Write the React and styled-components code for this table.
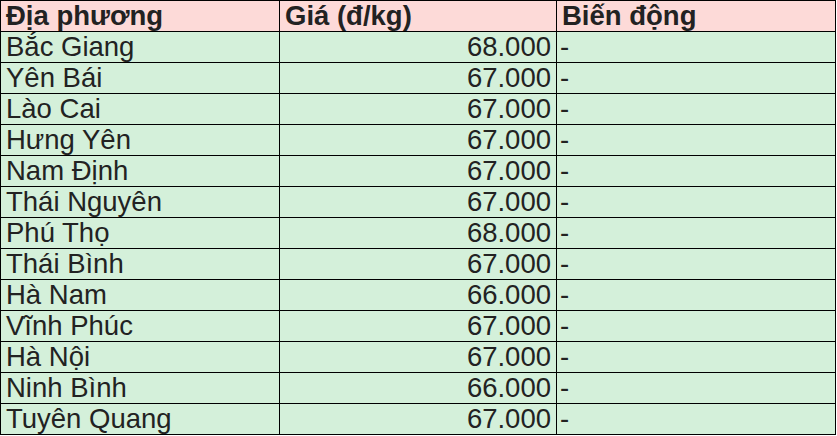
import React from "react";
import styled, { createGlobalStyle } from "styled-components";

const GlobalStyle = createGlobalStyle`
  html, body {
    margin: 0;
    padding: 0;
    background: #ffffff;
  }
  body {
    font-family: "Liberation Sans", Arial, sans-serif;
  }
`;

const rows = [
  { place: "Bắc Giang", price: "68.000", change: "-" },
  { place: "Yên Bái", price: "67.000", change: "-" },
  { place: "Lào Cai", price: "67.000", change: "-" },
  { place: "Hưng Yên", price: "67.000", change: "-" },
  { place: "Nam Định", price: "67.000", change: "-" },
  { place: "Thái Nguyên", price: "67.000", change: "-" },
  { place: "Phú Thọ", price: "68.000", change: "-" },
  { place: "Thái Bình", price: "67.000", change: "-" },
  { place: "Hà Nam", price: "66.000", change: "-" },
  { place: "Vĩnh Phúc", price: "67.000", change: "-" },
  { place: "Hà Nội", price: "67.000", change: "-" },
  { place: "Ninh Bình", price: "66.000", change: "-" },
  { place: "Tuyên Quang", price: "67.000", change: "-" },
];

const Table = styled.table`
  border-collapse: collapse;
  table-layout: fixed;
  width: 836px;
  font-family: "Liberation Sans", Arial, sans-serif;
  font-size: 27.5px;
  line-height: 30px;
  color: #222222;
`;

const Col = styled.col`
  width: ${(p) => p.$width}px;
`;

const HeadCell = styled.th`
  background: #fddad8;
  border: 1px solid #000;
  height: 30px;
  padding: 0 5px;
  text-align: left;
  font-weight: bold;
  white-space: nowrap;
  overflow: hidden;
`;

const cellPadding = {
  text: "0 5px",
  number: "0 5px 0 5px",
  change: "0 5px 0 3px",
};

const Cell = styled.td`
  background: #d4f0da;
  border: 1px solid #000;
  height: 30px;
  padding: ${(p) => cellPadding[p.$kind || "text"]};
  text-align: ${(p) => (p.$kind === "number" ? "right" : "left")};
  white-space: nowrap;
  overflow: hidden;
`;

export default function App() {
  return (
    <>
      <GlobalStyle />
      <Table>
        <colgroup>
          <Col $width={279} />
          <Col $width={277} />
          <Col $width={279} />
        </colgroup>
        <thead>
          <tr>
            <HeadCell>Địa phương</HeadCell>
            <HeadCell>Giá (đ/kg)</HeadCell>
            <HeadCell>Biến động</HeadCell>
          </tr>
        </thead>
        <tbody>
          {rows.map((row) => (
            <tr key={row.place}>
              <Cell>{row.place}</Cell>
              <Cell $kind="number">{row.price}</Cell>
              <Cell $kind="change">{row.change}</Cell>
            </tr>
          ))}
        </tbody>
      </Table>
    </>
  );
}
